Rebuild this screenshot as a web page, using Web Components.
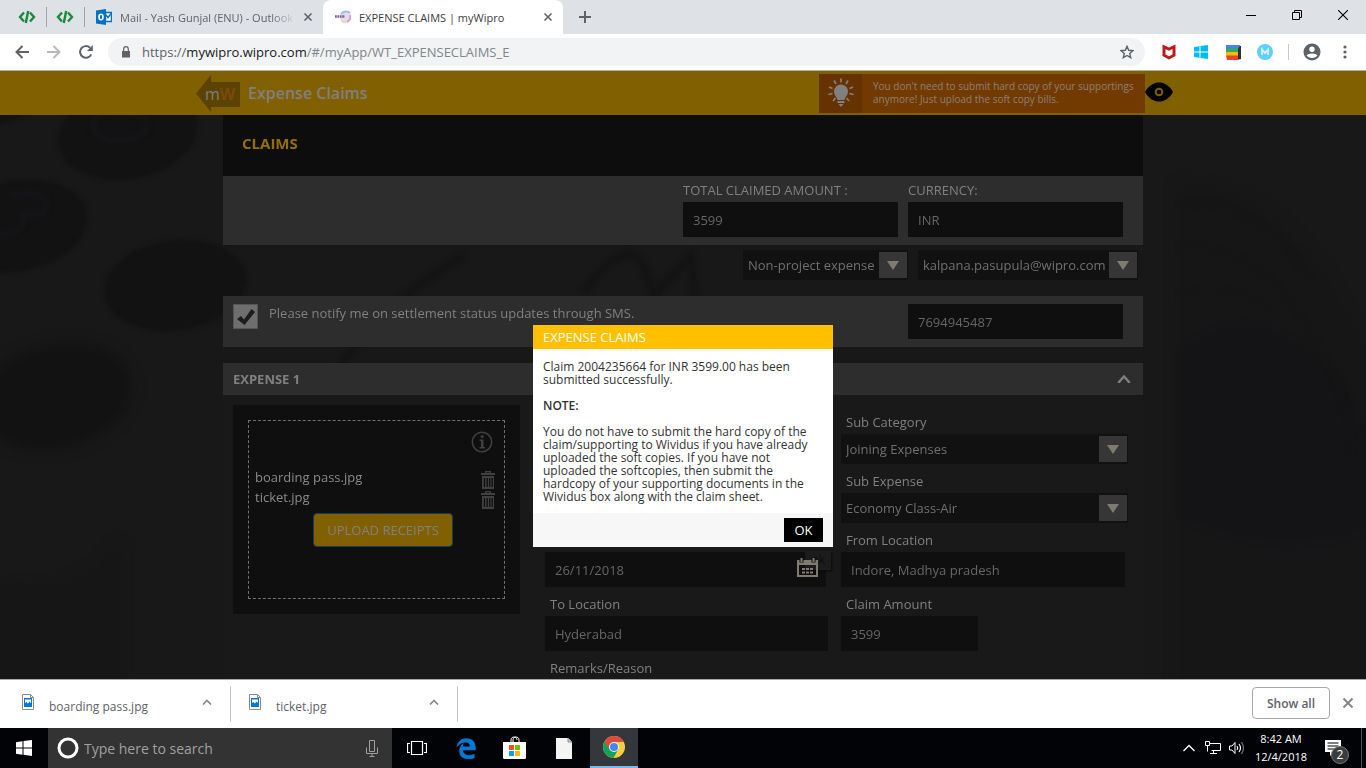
<!DOCTYPE html>
<html lang="en">
<head>
<meta charset="utf-8">
<title>EXPENSE CLAIMS | myWipro</title>
<style>
html,body{margin:0;height:100%}
body{font-family:"Open Sans","Noto Sans",sans-serif;font-size:13px;background:#181818}
</style>
</head>
<body>
<browser-window></browser-window>
<script>
const define = (name, render) => customElements.define(name, class extends HTMLElement {
  connectedCallback() {
    if (this.shadowRoot) return;
    this.attachShadow({ mode: 'open' }).innerHTML =
      '<style>*{box-sizing:border-box}button,input,select{font:inherit;margin:0}button{border:0;padding:0;background:none;color:inherit}svg{display:block;flex:none}</style>' + render(this);
  }
});
const attr = (el, name, fallback = '') => el.getAttribute(name) ?? fallback;

/* ---------- icons ---------- */
const icons = {
  code: [18, 14, '<g fill="none" stroke="#1a8a3c" stroke-width="2.4"><path d="M6 2.5 2 7l4 4.500M12 2.500 16 7l-4 4.500M10.200 1 7.800 13"/></g>'],
  outlook: [16, 16, '<path fill="#0072c6" d="M0 1.500 10 0v16L0 14.500z"/><path fill="#fff" stroke="#0072c6" stroke-width="1.500" d="M9.500 3.500h6v9h-6z"/><path fill="none" stroke="#0072c6" stroke-width="1.500" d="m10 6 2 2.500L15.500 4"/><ellipse cx="5" cy="8" rx="2" ry="2.700" fill="none" stroke="#fff" stroke-width="1.600"/>'],
  wipro: [16, 16, '<circle cx="10.500" cy="8" r="5.500" fill="#e6dcf0"/><path d="M6 5a6 6 0 0 1 9-1" stroke="#9ac0e6" stroke-width="2" fill="none"/><path d="M15 6a6 6 0 0 1-3 7" stroke="#d9a5cc" stroke-width="2" fill="none"/><path d="M6 11q2 3 5 2.500" stroke="#f0d0a0" stroke-width="1.500" fill="none"/><path d="M0 7.500h10" stroke="#7c6296" stroke-width="2.500" stroke-dasharray="1.800 .6"/>'],
  close: [10, 10, '<path d="m1.500 1.500 7 7m0-7-7 7" stroke="currentColor" stroke-width="1.600"/>'],
  closeBig: [12, 12, '<path d="m1.500 1.500 9 9m0-9-9 9" stroke="currentColor" stroke-width="2"/>'],
  plus: [12, 12, '<path d="M6 0v12M0 6h12" stroke="#5f6368" stroke-width="2"/>'],
  min: [10, 10, '<path d="M0 5.500h10" stroke="#000"/>'],
  restore: [10, 10, '<path d="M.5 2.500h7v7h-7zM2.500 2.500v-2h7v7h-2" fill="none" stroke="#000"/>'],
  winclose: [10, 10, '<path d="m0 0 10 10M10 0 0 10" stroke="#000" stroke-width="1.100"/>'],
  back: [14, 14, '<path d="M14 7H1.500M7.500 1l-6 6 6 6" fill="none" stroke="#5f6368" stroke-width="2"/>'],
  forward: [14, 14, '<path d="M0 7h12.500M6.500 1l6 6-6 6" fill="none" stroke="#bababa" stroke-width="2"/>'],
  reload: [14, 14, '<path d="M12.200 9.300A5.800 5.800 0 1 1 11 2.800" fill="none" stroke="#5f6368" stroke-width="2"/><path d="M13.800 0v6H8z" fill="#5f6368"/>'],
  lock: [8, 12, '<path d="M0 5h8v6.500H0z" fill="#5f6368"/><path d="M1.700 5V3a2.300 2.300 0 0 1 4.600 0v2" fill="none" stroke="#5f6368" stroke-width="1.200"/>'],
  star: [14, 14, '<path d="m7 1.300 1.700 4 4.200.4-3.200 2.800 1 4.200L7 10.500l-3.700 2.200 1-4.200L1.100 5.700l4.200-.4z" fill="none" stroke="#5f6368" stroke-width="1.400"/>'],
  mcafee: [14, 16, '<path d="m.5.500 6.500 3 6.500-3v11.500L7 15.500.5 12z" fill="#c01818"/><path d="M3.500 5 7 6.700 10.500 5v5.500L7 12.300l-3.500-1.800z" fill="#fff"/>'],
  win10: [14, 14, '<path d="M0 2 5.500 1.200v5.300H0zM6.500 1 14 0v6.500H6.500zM0 7.500h5.500v5.300L0 12zM6.500 7.500H14V14l-7.500-1z" fill="currentColor"/>'],
  start: [16, 16, '<path d="M0 2.200 6.500 1.300v6.200H0zM7.500 1.100 16 0v7.500H7.500zM0 8.500h6.500v6.200L0 13.800zM7.500 8.500H16V16l-8.500-1.200z" fill="#fff"/>'],
  books: [15, 15, '<path fill="#333" d="M11 1h4v13l-4 1z"/><path fill="#4285f4" d="M0 0h14L12 4H0z"/><path fill="#34a853" d="M0 3.500h12v4H0z"/><path fill="#fbbc05" d="M0 7h12v4H0z"/><path fill="#ea4335" d="M0 10.500h12V15H1z"/>'],
  memo: [16, 16, '<circle cx="8" cy="8" r="8" fill="#5fd0fb"/><path d="M5 11V5.500l3 3.500 3-3.500V11" fill="none" stroke="#d9f4ff" stroke-width="1.800"/>'],
  avatar: [18, 18, '<circle cx="9" cy="9" r="8.500" fill="#5f6368"/><circle cx="9" cy="6.300" r="2.700" fill="#fff"/><path d="M3.600 12.500C5 9.800 13 9.800 14.400 12.500 12 15.800 6 15.800 3.600 12.500z" fill="#fff"/>'],
  dots: [4, 14, '<g fill="#5f6368"><circle cx="2" cy="2" r="1.600"/><circle cx="2" cy="7" r="1.600"/><circle cx="2" cy="12" r="1.600"/></g>'],
  bulb: [26, 30, '<g fill="#808080"><path d="M13 6.500a7 7 0 0 1 7 7c0 3.500-3 5.500-3.500 8.500h-7C9 19 6 17 6 13.500a7 7 0 0 1 7-7zM9.500 23h7v2h-7zM10.500 26h5l-2.500 3z"/></g><path d="M13 .5v4M6 2.500l2 3.500M20 2.500 18 6M1 9l3.500 1.500M25 9l-3.500 1.500M.5 16.500 4.500 15.500M25.500 16.500 21.500 15.500M5 23l2.500-3M21 23l-2.500-3" stroke="#808080" stroke-width="1.700"/>'],
  eye: [28, 20, '<path d="M0 10C4 3 9 .5 14 .5S24 3 28 10c-4 7-9 9.500-14 9.500S4 17 0 10z"/><circle cx="14" cy="10" r="3.300" fill="none" stroke="#806000" stroke-width="2"/>'],
  chevUp: [14, 10, '<path d="M2 9V8l5-5.500L12 8v1" fill="none" stroke="#808080" stroke-width="2.400"/>'],
  info: [22, 22, '<circle cx="11" cy="11" r="9.700" fill="none" stroke="#404040" stroke-width="1.500"/><path d="M8.500 8.500h4V16H14v1.500H8.500V16H10v-6H8.500z" fill="#404040"/><circle cx="11.200" cy="5.500" r="1.600" fill="#404040"/>'],
  trash: [14, 18, '<path d="M0 2h14v2H0zM4 0h6v2H8.500V1.300h-3V2H4z" fill="#404040"/><path d="M1 5h12v13H1z" fill="#404040"/><path d="M3.500 7v9M6.200 7v9M8.800 7v9M11.200 7v9" stroke="#0f0f0f" stroke-width="1.300"/>'],
  calendar: [21, 19, '<path d="M1 4h19v14H1z" fill="none" stroke="#807b72" stroke-width="2"/><path d="M0 2h21v5H0z" fill="#807b72"/><path d="M4.500 0v4.500M16.500 0v4.500" stroke="#0f0f0f" stroke-width="4"/><path d="M4.500 0v4M16.500 0v4" stroke="#807b72" stroke-width="2"/><path d="M5 11h3M9 11h3M13 11h3M5 14.500h3M9 14.500h3M13 14.500h3" stroke="#807b72" stroke-width="2"/>'],
  image: [12, 16, '<path d="M.5.500h8l3 3v12H.5z" fill="#fff" stroke="#8a8a8a"/><path d="M8.500.500v3h3" fill="none" stroke="#8a8a8a"/><path d="M2 4h8v9H2z" fill="#0078d7"/><path d="M3 5.500h6v3.500L7.500 7.500 6 9.500 4.500 8 3 9z" fill="#fff"/>'],
  chevron: [10, 6, '<path d="m1 5.500 4-4 4 4" fill="none" stroke="currentColor" stroke-width="1.700"/>'],
  cortana: [22, 22, '<circle cx="11" cy="11" r="9" fill="none" stroke="#fff" stroke-width="3"/>'],
  mic: [12, 17, '<path d="M3.500.500h5v11h-5zM.5 7.500v6h11v-6M6 13.500v3M3.500 16.500h5" fill="none" stroke="#a0a0a0"/>'],
  taskview: [20, 14, '<path d="M4.500.500h11v13h-11zM3 2.500H.5v9H3M17 2.500h2.500v9H17" fill="none" stroke="#fff" stroke-width="1.200"/>'],
  edge: [20, 21, '<path fill="#0078d7" d="M.5 9.500C1.300 3.600 5.300.300 10.500.300c6 0 9.200 4.200 9.200 9.300v2.600H7c.1 3.400 3.200 5 6.200 5 2 0 3.800-.5 5.300-1.400v4.100c-1.800.8-3.900 1.200-6 1.200-5.600 0-9.300-3.200-9.300-8.200 0-3.500 2-6.300 5-7.800C7.300 6 7 7.200 6.900 8.400h6.900c0-2.200-1.200-3.900-4-3.900C6 4.500 2.600 6.400.500 9.500z"/>'],
  store: [24, 24, '<path d="M0 6h23v15.500q0 1.500-1.500 1.500h-20Q0 23 0 21.500z" fill="#fff"/><path d="M8 8V4c0-4 6-4 6 0M10 8V4c0-4 6-4 6 0v3" fill="none" stroke="#fff"/><path d="M6 9h5v5H6z" fill="#f25022"/><path d="M12 9h5v5h-5z" fill="#7fba00"/><path d="M6 15h5v5H6z" fill="#00a4ef"/><path d="M12 15h5v5h-5z" fill="#ffb900"/>'],
  file: [16, 21, '<path d="M0 0h12l4 4v17H0z" fill="#f4f4f4"/><path d="M12 0v4h4" fill="#ccc" stroke="#777" stroke-width=".8"/>'],
  chrome: [22, 22, '<circle cx="11" cy="11" r="11" fill="#ffcd40"/><path d="M11 11 1.500 5.500a11 11 0 0 0 9 16.500L15.500 13z" fill="#12a35d"/><path d="M1.500 5.500A11 11 0 0 1 20.700 6H11L6.300 13.500z" fill="#dd4b3e"/><circle cx="11" cy="11" r="5" fill="#f4f4f4"/><circle cx="11" cy="11" r="4" fill="#4285f4"/>'],
  up: [12, 8, '<path d="m.5 7 5.500-5.500L11.500 7" fill="none" stroke="#fff" stroke-width="1.300"/>'],
  network: [16, 14, '<path d="M4.500 2.500h11v7h-9M8.500 9.500v3M5 12.500h7M.5.500h4v4h-4zM2.500 4.500v6" fill="none" stroke="#fff"/>'],
  volume: [16, 14, '<path d="M.5 5h2.500l3-3.500v11L3 9H.500z" fill="none" stroke="#fff"/><path d="M8 5q1.500 2 0 4M10 3q3 4 0 8" fill="none" stroke="#fff" stroke-width="1.200"/><path d="M12.500 1q4 6 0 12" fill="none" stroke="#777" stroke-width="1.200"/>'],
  notes: [16, 16, '<path d="M0 0h16v12h-7l-4 4v-4H0z" fill="#fff"/><path d="M2.500 3h11M2.500 6h11M2.500 9h7" stroke="#000" stroke-width="1.200"/>']
};
define('ui-icon', el => {
  const [w, h, body] = icons[attr(el, 'name')];
  return `<style>:host{display:block;flex:none}</style><svg width="${w}" height="${h}" viewBox="0 0 ${w} ${h}" aria-hidden="true">${body}</svg>`;
});

/* ---------- browser ---------- */
define('browser-tabs', () => `
<style>
:host{display:flex;height:34px;background:#dee1e6;color:#5f6368;font-size:11px}
button{display:grid;place-items:center}
.pin{width:38px;display:grid;place-items:center;position:relative}
.pin:first-of-type{margin-left:8px}
.pin::after{content:"";position:absolute;right:-1px;top:7px;height:20px;width:1px;background:#a0a4a9}
.tab{display:flex;align-items:center;width:240px}
.mail{padding-left:12px;width:239px}
.mail button,.on button{width:30px;height:30px;flex:none}
.tab span{flex:1;overflow:hidden;white-space:nowrap;margin-left:8px}
.mail span{-webkit-mask-image:linear-gradient(90deg,#000 150px,transparent 176px);mask-image:linear-gradient(90deg,#000 150px,transparent 176px)}
.on{background:#fff;color:#3c4043;border-radius:8px 8px 0 0;padding-left:12px}
.on button{color:#5f6368}
.new{width:44px}
.win{margin-left:auto;display:flex}
.win button{width:46px;height:29px}
</style>
<a class="pin"><ui-icon name="code"></ui-icon></a>
<a class="pin"><ui-icon name="code"></ui-icon></a>
<div class="tab mail"><ui-icon name="outlook"></ui-icon><span>Mail - Yash Gunjal (ENU) - Outlook</span><button aria-label="Close tab"><ui-icon name="close"></ui-icon></button></div>
<div class="tab on"><ui-icon name="wipro"></ui-icon><span>EXPENSE CLAIMS | myWipro</span><button aria-label="Close tab"><ui-icon name="close"></ui-icon></button></div>
<button class="new" aria-label="New tab"><ui-icon name="plus"></ui-icon></button>
<div class="win"><button aria-label="Minimize"><ui-icon name="min"></ui-icon></button><button aria-label="Restore"><ui-icon name="restore"></ui-icon></button><button aria-label="Close"><ui-icon name="winclose"></ui-icon></button></div>`);

define('browser-toolbar', () => `
<style>
:host{display:flex;align-items:center;height:36px;background:#fff;padding:0 10px 0 6px}
button{display:grid;place-items:center;width:32px;height:32px}
.url{flex:1;display:flex;align-items:center;height:28px;border-radius:14px;background:#f1f3f4;margin:0 8px 0 6px;padding:0 0 0 14px;color:#80868b;font-size:13px}
.url a{flex:1;margin-left:12px;color:inherit;text-decoration:none;white-space:nowrap}
.url b{font-weight:400;color:#202124}.url i{font-style:normal;color:#5f6368}
.url button{width:36px}
.bar{width:1px;height:16px;background:#c8cacd;margin:0 7px}
.menu{width:22px;margin-left:6px}
</style>
<button aria-label="Back"><ui-icon name="back"></ui-icon></button><button aria-label="Forward"><ui-icon name="forward"></ui-icon></button><button aria-label="Reload"><ui-icon name="reload"></ui-icon></button>
<div class="url"><ui-icon name="lock"></ui-icon><a href="#/myApp/WT_EXPENSECLAIMS_E"><i>https://</i><b>mywipro.wipro.com</b>/#/myApp/WT_EXPENSECLAIMS_E</a><button aria-label="Bookmark"><ui-icon name="star"></ui-icon></button></div>
<button aria-label="McAfee"><ui-icon name="mcafee"></ui-icon></button><button aria-label="Windows" style="color:#00bcf2"><ui-icon name="win10"></ui-icon></button><button aria-label="Books"><ui-icon name="books"></ui-icon></button><button aria-label="Extension"><ui-icon name="memo"></ui-icon></button>
<span class="bar"></span>
<button aria-label="Profile"><ui-icon name="avatar"></ui-icon></button><button class="menu" aria-label="Menu"><ui-icon name="dots"></ui-icon></button>`);

define('download-item', () => `
<style>
:host{display:flex;align-items:center;width:227px;height:36px;border-right:1px solid #c8c8c8;color:#5f6368;font-size:12px}
ui-icon{margin-bottom:4px}
.icon{margin-left:18px}
span{flex:1;margin:4px 0 0 15px;white-space:nowrap}
button{width:46px;height:30px;display:grid;place-items:center;color:#8a8a8a}
</style>
<ui-icon class="icon" name="image"></ui-icon><span><slot></slot></span><button aria-label="More"><ui-icon name="chevron"></ui-icon></button>`);

define('download-bar', () => `
<style>
:host{display:flex;align-items:center;height:49px;background:#fff;border-top:1px solid #a8a8a8;color:#5f6368;padding-left:4px}
.all{margin-left:auto;width:78px;height:32px;border:1px solid #a6a8ab;border-radius:4px;font-size:12px;font-weight:600;margin-bottom:2px}
.x{width:36px;height:32px;display:grid;place-items:center;color:#80868b;margin-bottom:2px}
</style>
<download-item>boarding pass.jpg</download-item><download-item>ticket.jpg</download-item>
<button class="all">Show all</button><button class="x" aria-label="Close downloads"><ui-icon name="closeBig"></ui-icon></button>`);

define('task-bar', () => `
<style>
:host{display:flex;height:40px;background:#020307;color:#fff}
button{display:grid;place-items:center;width:49px;height:40px}
.start{width:48px}
.search{display:flex;align-items:center;width:344px;background:#333;padding:0 14px 0 9px}
.search input{flex:1;min-width:0;border:0;outline:0;background:none;font-size:14px;color:#fff;padding:0 0 0 5px}
.search input::placeholder{color:#a0a0a0;opacity:1}
.apps{display:flex}
.run{background:#34373b;border-bottom:2px solid #76b9ed;width:48px;margin-left:2px}
.tray{margin-left:auto;display:flex;align-items:center}
.tray button{width:24px}
.clock{width:64px;text-align:center;font-size:11px;line-height:18px}
.tray .note{position:relative;width:40px}
.badge{position:absolute;left:18px;top:18px;width:18px;height:18px;border-radius:9px;background:#3c3c3c;border:1px solid #777;font-size:12px;line-height:16px;text-align:center}
.desk{width:5px;height:40px;border-left:1px solid #555;margin-left:8px}
</style>
<button class="start" aria-label="Start"><ui-icon name="start"></ui-icon></button>
<div class="search"><ui-icon name="cortana"></ui-icon><input aria-label="Search" placeholder="Type here to search"><ui-icon name="mic"></ui-icon></div>
<div class="apps"><button aria-label="Task view"><ui-icon name="taskview"></ui-icon></button><button aria-label="Edge"><ui-icon name="edge"></ui-icon></button><button aria-label="Store"><ui-icon name="store"></ui-icon></button><button aria-label="Document"><ui-icon name="file"></ui-icon></button><button class="run" aria-label="Chrome"><ui-icon name="chrome"></ui-icon></button></div>
<div class="tray"><button aria-label="Hidden icons"><ui-icon name="up"></ui-icon></button><button aria-label="Network"><ui-icon name="network"></ui-icon></button><button aria-label="Volume"><ui-icon name="volume"></ui-icon></button>
<div class="clock">8:42 AM<br>12/4/2018</div><button class="note" aria-label="Notifications"><ui-icon name="notes"></ui-icon><span class="badge">2</span></button><span class="desk"></span></div>`);

/* ---------- claim page ---------- */
define('claim-field', el => `
<style>
:host{display:block;position:relative;color:#808080;font-size:13px}
label{display:block;height:24px;line-height:24px;padding-left:var(--label-indent,5px);white-space:nowrap}
input{display:block;width:100%;height:35px;border:0;border-radius:0;background:#0f0f0f;color:#666;padding:0 10px;outline:0}
slot{display:block;position:absolute;right:8px;bottom:10px}
</style>
${el.hasAttribute('label') ? `<label for="f">${attr(el, 'label')}</label>` : ''}
<input id="f" aria-label="${attr(el, 'label') || attr(el, 'name')}" value="${attr(el, 'value')}"><slot></slot>`);

define('claim-select', el => `
<style>
:host{display:block;color:#808080;font-size:13px}
label{display:block;height:24px;line-height:24px;padding-left:5px}
div{display:flex;position:relative;height:30px;background:#111;padding:2px 1px 2px 0}
select{appearance:none;flex:1;min-width:0;border:0;border-radius:0;outline:0;background:none;color:#707070;padding:0 28px 0 5px}
i{position:absolute;right:1px;top:2px;width:28px;height:26px;background:#363636;display:grid;place-items:center;pointer-events:none}
</style>
${el.hasAttribute('label') ? `<label for="s">${attr(el, 'label')}</label>` : ''}
<div><select id="s" aria-label="${attr(el, 'label') || attr(el, 'name')}"><option>${attr(el, 'value')}</option></select><i><svg width="12" height="9" viewBox="0 0 12 9"><path d="M0 0h12L6 9z" fill="#807b72"/></svg></i></div>`);

define('claim-header', () => `
<style>
:host{display:block;background:#806000;color:#808080}
header{display:flex;align-items:center;max-width:980px;height:44px;margin:0 auto;padding-left:3px}
.back{position:relative;display:block;width:44px;height:37px;text-decoration:none;line-height:38px;font-size:16px;padding-left:9px;color:#807d78}
.back svg{position:absolute;left:0;top:0}
.back span{position:relative}.back b{color:#7a4a0a}
h1{margin:0 0 0 8px;font-size:16px;font-weight:600;white-space:nowrap}
aside{margin-left:auto;display:flex;align-items:center;width:326px;height:39px;background:#733a00;font-size:10px;line-height:13px;color:#8c8078}
aside>ui-icon{background:#663300;padding:4px 8px 5px 9px}
p{margin:0 0 0 11px;white-space:nowrap}
button{margin-bottom:3px}
</style>
<header><a class="back" href="#/home"><svg width="44" height="37" viewBox="0 0 44 37"><path d="M0 18.500 15 0v7h29v25H15v5z" fill="#5c4303"/></svg><span>m<b>W</b></span></a><h1>Expense Claims</h1>
<aside><ui-icon name="bulb"></ui-icon><p>You don't need to submit hard copy of your supportings<br>anymore! Just upload the soft copy bills.</p></aside>
<button aria-label="Preview"><ui-icon name="eye"></ui-icon></button></header>`);

define('desk-backdrop', () => `
<style>:host{display:block;position:absolute;inset:0;overflow:hidden}svg{width:100%;height:100%}</style>
<svg viewBox="0 115 1366 564" preserveAspectRatio="xMidYMid slice" aria-hidden="true">
<defs><filter id="b" color-interpolation-filters="sRGB"><feGaussianBlur stdDeviation="2"/></filter><filter id="c" color-interpolation-filters="sRGB"><feGaussianBlur stdDeviation="6"/></filter></defs>
<path d="M0 115h1366v564H0z" fill="#181818"/>
<g filter="url(#b)" fill="#121212">
<ellipse cx="20" cy="100" rx="60" ry="27"/><ellipse cx="168" cy="132" rx="65" ry="42" transform="rotate(-10 168 132)"/>
<ellipse cx="65" cy="218" rx="66" ry="42" transform="rotate(-12 65 218)"/><ellipse cx="212" cy="273" rx="66" ry="42" transform="rotate(-8 212 273)"/>
<ellipse cx="-30" cy="300" rx="46" ry="40"/></g>
<g filter="url(#c)" fill="#121212"><ellipse cx="102" cy="376" rx="70" ry="48" transform="rotate(-14 102 376)"/><path d="M0 540q120 40 160-30v170H0z" fill="#161616"/></g>
<g filter="url(#b)" fill="none" stroke="#151518" stroke-width="6"><ellipse cx="161" cy="125" rx="25" ry="14"/><path d="M58 190q32-8 35 6t-22 12q4 18-22 18-20-2-18-14"/></g>
<g filter="url(#b)" fill="none" stroke="#141414" stroke-width="8"><path d="M480 245Q400 290 350 370M590 280q30-40 45-35t20 40l35-40 5 45"/></g>
<g filter="url(#c)"><path d="M1143 180q90 0 150 110t73 200v190h-223z" fill="#161617"/><path d="M1143 330q60-45 120 0t80 160q-90 50-200 0z" fill="#141416"/></g>
<g filter="url(#b)" fill="none" stroke="#151515" stroke-width="3"><path d="M1143 198q70-10 120 70M1143 238q60-10 110 60t50 130M1143 282q50-20 90 20"/></g></svg>`);

define('receipt-box', () => `
<style>
:host{display:block;background:#0f0f0f;padding:15px;height:209px;color:#8a8a8a;font-size:13px}
section{border:1px dashed #707070;height:179px;padding:10px 9px 0 6px}
.info{display:grid;width:22px;height:22px;margin:0 2px 14px auto}
ul{list-style:none;margin:0;padding:0}
li{display:flex;align-items:center;justify-content:space-between;height:20px;white-space:nowrap}
li button{padding-top:6px}
.up{display:block;width:140px;height:34px;margin:6px auto 0 58px;background:#806000;border:1px solid #1c3a55;border-radius:4px;color:#808080;white-space:nowrap}
</style>
<section><button class="info" aria-label="Information"><ui-icon name="info"></ui-icon></button>
<ul><li>boarding pass.jpg<button aria-label="Delete boarding pass.jpg"><ui-icon name="trash"></ui-icon></button></li><li>ticket.jpg<button aria-label="Delete ticket.jpg"><ui-icon name="trash"></ui-icon></button></li></ul>
<button class="up">UPLOAD RECEIPTS</button></section>`);

define('claim-form', () => `
<style>
:host{display:block;position:relative;width:100%;max-width:920px;margin:0 auto;color:#808080}
h2{margin:0;height:61px;padding:16px 19px 0;background:#0d0d0d;color:#946f00;font-size:15px;line-height:24px}
.row{display:flex;justify-content:flex-end;gap:10px;background:#2d2d2d;padding:2px 20px 8px;--label-indent:0}
.row claim-field{width:215px}
.picks{display:flex;justify-content:flex-end;gap:10px;padding:5px 5px 16px}
.a{width:165px}.b{width:220px}
.sms{display:flex;justify-content:space-between;align-items:flex-start;background:#2d2d2d;padding:8px 20px 8px 10px}
.sms claim-field{width:215px}
.sms label{display:flex;gap:11px;line-height:18px;font-size:13px}
.sms span{white-space:nowrap}
.tick{display:grid}
.tick>*{grid-area:1/1}
input{appearance:none;width:25px;height:25px;background:#6e6e6e;border:1px solid #555}
.tick svg{pointer-events:none;place-self:center}
h3{display:flex;justify-content:space-between;align-items:center;margin:16px 0 0;height:32px;padding:0 12px 0 10px;background:#2d2d2d;font-size:13px}
.panel{display:grid;grid-template-columns:287px 1fr;gap:25px;align-items:start;background:#191919;padding:10px 15px 40px 10px}
.fields{display:grid;grid-template-columns:283fr 287fr;gap:5px 13px;padding-top:5px}
.fields>*{align-self:end}
.c1{grid-column:1}.c2{grid-column:2}
.date{margin-right:2px}.from{margin-right:3px}.amt{width:137px}
.tip{position:absolute;right:-13px;top:-7px;width:26px;height:19px;background:#1c1c1c;box-shadow:1px 1px 2px #0a0a0a;color:#0d0d0d;line-height:17px;text-align:center;z-index:-1}
.cal{position:relative;z-index:0}
.remarks{line-height:24px;padding-left:5px}
</style>
<h2>CLAIMS</h2>
<div class="row"><claim-field label="TOTAL CLAIMED AMOUNT :" value="3599"></claim-field><claim-field label="CURRENCY:" value="INR"></claim-field></div>
<div class="picks"><claim-select class="a" name="Expense type" value="Non-project expense"></claim-select><claim-select class="b" name="Approver" value="kalpana.pasupula@wipro.com"></claim-select></div>
<div class="sms"><label><span class="tick"><input type="checkbox" checked><svg width="20" height="20" viewBox="0 0 20 20"><path d="m1 12 4-3 3 3.500L15.500 2l3.500 3L8.500 18z" fill="#1c1c1c"/></svg></span><span>Please notify me on settlement status updates through SMS.</span></label><claim-field name="Phone" value="7694945487"></claim-field></div>
<h3>EXPENSE 1<button aria-label="Collapse"><ui-icon name="chevUp"></ui-icon></button></h3>
<div class="panel"><receipt-box></receipt-box>
<div class="fields">
<claim-select class="c2" label="Sub Category" value="Joining Expenses"></claim-select>
<claim-select class="c2" label="Sub Expense" value="Economy Class-Air"></claim-select>
<claim-field class="c1 date" name="Date" value="26/11/2018"><div class="cal"><span class="tip" aria-hidden="true">ok</span><ui-icon name="calendar"></ui-icon></div></claim-field>
<claim-field class="c2 from" label="From Location" value="Indore, Madhya pradesh"></claim-field>
<claim-field class="c1" label="To Location" value="Hyderabad"></claim-field>
<claim-field class="c2 amt" label="Claim Amount" value="3599"></claim-field>
<div class="c1 remarks">Remarks/Reason</div>
</div></div>`);

define('message-dialog', () => `
<style>
:host{position:absolute;inset:0;display:flex;justify-content:center;align-items:flex-start;padding-top:254px}
dialog{position:static;margin:0;border:0;padding:0;width:300px;background:#fff;color:#333;font-size:12px;line-height:13px}
h2{margin:0;background:#ffc000;color:#fff;font-size:13px;font-weight:400;line-height:24px;padding:0 10px}
.body{padding:11px 0 10px 10px}
p{margin:0 0 13px;white-space:nowrap}
p:last-child{margin:0}
b{font-weight:600}
footer{display:flex;justify-content:flex-end;background:#f7f7f7;padding:5px 10px}
button{width:39px;height:24px;background:#000;color:#fff;font-size:13px}
</style>
<dialog open><h2>EXPENSE CLAIMS</h2><div class="body">
<p>Claim 2004235664 for INR 3599.00 has been<br>submitted successfully.</p><p><b>NOTE:</b></p>
<p>You do not have to submit the hard copy of the<br>claim/supporting to Wividus if you have already<br>uploaded the soft copies. If you have not<br>uploaded the softcopies, then submit the<br>hardcopy of your supporting documents in the<br>Wividus box along with the claim sheet.</p></div>
<footer><button>OK</button></footer></dialog>`);

define('browser-window', () => `
<style>
:host{display:flex;flex-direction:column;height:100vh;overflow:hidden}
main{position:relative;flex:1;min-height:0;overflow:hidden;border-top:1px solid #b0b0b0;background:#181818}
.stage{position:relative;height:100%}
</style>
<browser-tabs></browser-tabs><browser-toolbar></browser-toolbar>
<main><claim-header></claim-header><div class="stage"><desk-backdrop></desk-backdrop><claim-form></claim-form></div><message-dialog></message-dialog></main>
<download-bar></download-bar><task-bar></task-bar>`);
</script>
</body>
</html>
